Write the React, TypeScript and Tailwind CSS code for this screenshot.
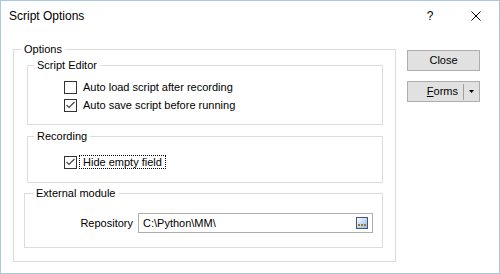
import type { ReactNode } from "react";

function GroupBox({
  title,
  className,
  legendClassName,
  bodyClassName,
  children,
}: {
  title: string;
  className: string;
  legendClassName: string;
  bodyClassName: string;
  children: ReactNode;
}) {
  return (
    <fieldset className={`border border-[#dcdcdc] ${className}`}>
      <legend className={`px-[3px] leading-[15px] ${legendClassName}`}>{title}</legend>
      <div className={bodyClassName}>{children}</div>
    </fieldset>
  );
}

function CheckBox({ checked }: { checked: boolean }) {
  return (
    <svg width="13" height="13" viewBox="0 0 13 13" className="shrink-0">
      <rect x="0.5" y="0.5" width="12" height="12" fill="#fff" stroke="#333" />
      {checked && (
        <path d="M2.5 6 L5 8.5 L10.5 3" fill="none" stroke="#444" strokeWidth="1.2" />
      )}
    </svg>
  );
}

function CheckRow({
  label,
  checked,
  focused = false,
}: {
  label: string;
  checked: boolean;
  focused?: boolean;
}) {
  return (
    <div className="flex h-[18px] items-center">
      <CheckBox checked={checked} />
      <span
        className={`ml-[2px] border px-[3px] leading-[12px] ${
          focused ? "border-dotted border-black" : "border-transparent"
        }`}
      >
        {label}
      </span>
    </div>
  );
}

function BrowseIcon() {
  return (
    <svg width="12" height="12" viewBox="0 0 12 12">
      <defs>
        <linearGradient id="browse-fill" x1="0" y1="0" x2="1" y2="1">
          <stop offset="0" stopColor="#ffffff" />
          <stop offset="1" stopColor="#8fb6ea" />
        </linearGradient>
      </defs>
      <rect x="0.5" y="0.5" width="11" height="11" fill="url(#browse-fill)" stroke="#3e5878" />
      <rect x="2" y="7" width="2" height="2" fill="#a8742c" />
      <rect x="5" y="7" width="2" height="2" fill="#a8742c" />
      <rect x="8" y="7" width="2" height="2" fill="#a8742c" />
    </svg>
  );
}

export default function App() {
  return (
    <div className="flex h-[274px] w-[500px] flex-col border border-[#aac8e4] bg-white font-['Liberation_Sans',Arial,sans-serif] text-[11px] text-black">
      {/* title bar */}
      <div className="flex h-[30px] shrink-0 items-center">
        <div className="flex-1 pl-[8px] text-[12px]">Script Options</div>
        <div className="flex h-full w-[46px] items-center justify-center text-[12px]">?</div>
        <div className="flex h-full w-[46px] items-center justify-center">
          <svg width="10" height="10" viewBox="0 0 10 10">
            <path d="M0.5 0.5 L9.5 9.5 M9.5 0.5 L0.5 9.5" stroke="#000" strokeWidth="1" />
          </svg>
        </div>
      </div>

      <div className="flex pl-[12px] pt-[11px]">
        <GroupBox
          title="Options"
          className="w-[383px]"
          legendClassName="ml-[7px]"
          bodyClassName="pb-[13px] pl-[10px] pr-[12px] pt-[1px]"
        >
          <GroupBox
            title="Script Editor"
            className="ml-[3px] w-[356px]"
            legendClassName="ml-[6px]"
            bodyClassName="pb-[10px] pl-[36px] pt-[5px]"
          >
            <CheckRow label="Auto load script after recording" checked={false} />
            <CheckRow label="Auto save script before running" checked />
          </GroupBox>

          <GroupBox
            title="Recording"
            className="ml-[3px] mt-[4px] w-[356px]"
            legendClassName="ml-[6px]"
            bodyClassName="pb-[11px] pl-[36px] pt-[9px]"
          >
            <CheckRow label="Hide empty field" checked focused />
          </GroupBox>

          <GroupBox
            title="External module"
            className="mt-[3px] w-[359px]"
            legendClassName="ml-[8px]"
            bodyClassName="pb-[14px] pt-[12px]"
          >
            <div className="flex items-center">
              <div className="w-[108px] text-right">Repository</div>
              <div className="ml-[5px] flex h-[20px] w-[235px] items-center border border-[#adadad] pl-[4px] pr-[4px]">
                <span className="flex-1">C:\Python\MM\</span>
                <BrowseIcon />
              </div>
            </div>
          </GroupBox>
        </GroupBox>

        <div className="ml-[11px] flex flex-col pt-[8px]">
          <button
            type="button"
            className="flex h-[21px] w-[73px] items-center justify-center border border-[#adadad] bg-[#e1e1e1]"
          >
            Close
          </button>
          <button
            type="button"
            className="mt-[10px] flex h-[21px] w-[73px] items-center border border-[#adadad] bg-[#e1e1e1]"
          >
            <span className="flex-1 pr-[5px] text-right">
              <span className="underline">F</span>orms
            </span>
            <span className="h-[16px] w-px bg-[#a0a0a0]" />
            <span className="flex w-[15px] items-center justify-center">
              <svg width="5" height="3" viewBox="0 0 5 3">
                <path d="M0 0 H5 L2.5 3 Z" fill="#000" />
              </svg>
            </span>
          </button>
        </div>
      </div>
    </div>
  );
}
